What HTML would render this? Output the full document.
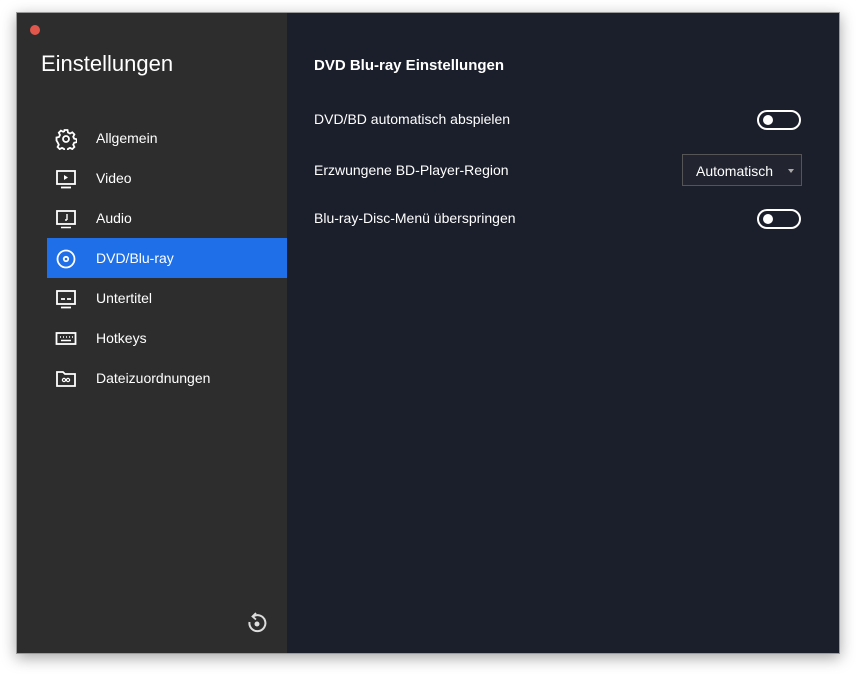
<!DOCTYPE html>
<html><head><meta charset="utf-8"><style>
*{margin:0;padding:0;box-sizing:border-box}
body{width:856px;height:674px;background:#fff;font-family:"Liberation Sans",sans-serif;position:relative;overflow:hidden}
.win{position:absolute;left:16px;top:12px;width:824px;height:642px;box-shadow:0 4px 14px rgba(0,0,0,.35);border:1px solid #9a9a9a}
.side{position:absolute;left:0;top:0;width:270px;height:100%;background:#2d2d2d}
.main{position:absolute;left:270px;top:0;right:0;height:100%;background:#1b1f2b}
.dot{position:absolute;left:13px;top:12px;width:10px;height:10px;border-radius:50%;background:#e2574c}
.title{position:absolute;left:24px;top:38px;color:#fff;font-size:22px}
.item{position:absolute;left:30px;width:240px;height:40px;color:#fff;font-size:14px}
.item span{position:absolute;left:49px;top:12px}
.item svg{position:absolute;left:8px;top:10px}
.sel{background:#1f6fe8}
.h{position:absolute;left:27px;top:44px;color:#fff;font-weight:bold;font-size:15px}
.lbl{position:absolute;left:27px;color:#fff;font-size:14px}
.tg{position:absolute;left:470px;width:44px;height:20px;border:2px solid #fff;border-radius:10px}
.tg:after{content:"";position:absolute;left:4px;top:3px;width:10px;height:10px;border-radius:50%;background:#fff}
.dd{position:absolute;left:395px;top:141px;width:120px;height:32px;border:1px solid #555;background:#222530;color:#fff;font-size:14px}
.dd span{position:absolute;left:13px;top:8px}
.dd i{position:absolute;right:7px;top:14px;border-left:3px solid transparent;border-right:3px solid transparent;border-top:4px solid #aaa}
</style></head><body>
<div class="win">
<div class="side">
<div class="dot"></div>
<div class="title">Einstellungen</div>
<div class="item" style="top:105px"><svg width="22" height="22" viewBox="0 0 22 22" fill="none" stroke="#fff" stroke-width="1.8"><circle cx="11" cy="11" r="3"/><path d="M9.5 2h3l.5 2.5 2 1 2.3-1.2 2.1 2.1-1.2 2.3 1 2 2.5.5v3l-2.5.5-1 2 1.2 2.3-2.1 2.1-2.3-1.2-2 1-.5 2.5h-3l-.5-2.5-2-1-2.3 1.2-2.1-2.1 1.2-2.3-1-2L1.5 12.5v-3L4 9l1-2-1.2-2.3 2.1-2.1L8.2 3.8l1-.5z"/></svg><span>Allgemein</span></div>
<div class="item" style="top:145px"><svg width="22" height="22" viewBox="0 0 22 22" fill="none" stroke="#fff" stroke-width="1.8"><rect x="2" y="3" width="18" height="13"/><path d="M6 19.5h10"/><path d="M9 7l4 2.5L9 12z" fill="#fff" stroke="none"/></svg><span>Video</span></div>
<div class="item" style="top:185px"><svg width="22" height="22" viewBox="0 0 22 22" fill="none" stroke="#fff" stroke-width="1.8"><rect x="2" y="3" width="18" height="13"/><path d="M6 19.5h10M12 6v6M10 12h2" stroke-width="1.4"/></svg><span>Audio</span></div>
<div class="item sel" style="top:225px"><svg width="22" height="22" viewBox="0 0 22 22" fill="none" stroke="#fff" stroke-width="1.8"><circle cx="11" cy="11" r="8.5"/><circle cx="11" cy="11" r="2.2"/></svg><span>DVD/Blu-ray</span></div>
<div class="item" style="top:265px"><svg width="22" height="22" viewBox="0 0 22 22" fill="none" stroke="#fff" stroke-width="1.8"><rect x="2" y="3" width="18" height="13"/><path d="M6 19.5h10M6 11h4M12 11h4"/></svg><span>Untertitel</span></div>
<div class="item" style="top:305px"><svg width="22" height="22" viewBox="0 0 22 22" fill="none" stroke="#fff" stroke-width="1.8"><rect x="1.5" y="5" width="19" height="11"/><path d="M5 9h1M8 9h1M11 9h1M14 9h1M17 9h1M6 12.5h10" stroke-width="1.5"/></svg><span>Hotkeys</span></div>
<div class="item" style="top:345px"><svg width="22" height="22" viewBox="0 0 22 22" fill="none" stroke="#fff" stroke-width="1.8"><path d="M2 4h6l2 2h10v12H2z"/><circle cx="9" cy="12" r="1.6" stroke-width="1.2"/><circle cx="13" cy="12" r="1.6" stroke-width="1.2"/></svg><span>Dateizuordnungen</span></div>
<svg style="position:absolute;left:228px;top:598px" width="24" height="24" viewBox="0 0 24 24" fill="none" stroke="#ddd" stroke-width="2"><path d="M8 5.5A8 8 0 1 1 4.5 11"/><path d="M11 2L7.5 5.5 11 8.5" stroke-width="1.8"/><circle cx="12" cy="13" r="2.5" fill="#ddd" stroke="none"/></svg>
</div>
<div class="main">
<div class="h">DVD Blu-ray Einstellungen</div>
<div class="lbl" style="top:98px">DVD/BD automatisch abspielen</div>
<div class="tg" style="top:97px"></div>
<div class="lbl" style="top:149px">Erzwungene BD-Player-Region</div>
<div class="dd"><span>Automatisch</span><i></i></div>
<div class="lbl" style="top:197px">Blu-ray-Disc-Menü überspringen</div>
<div class="tg" style="top:196px"></div>
</div>
</div>
</body></html>
